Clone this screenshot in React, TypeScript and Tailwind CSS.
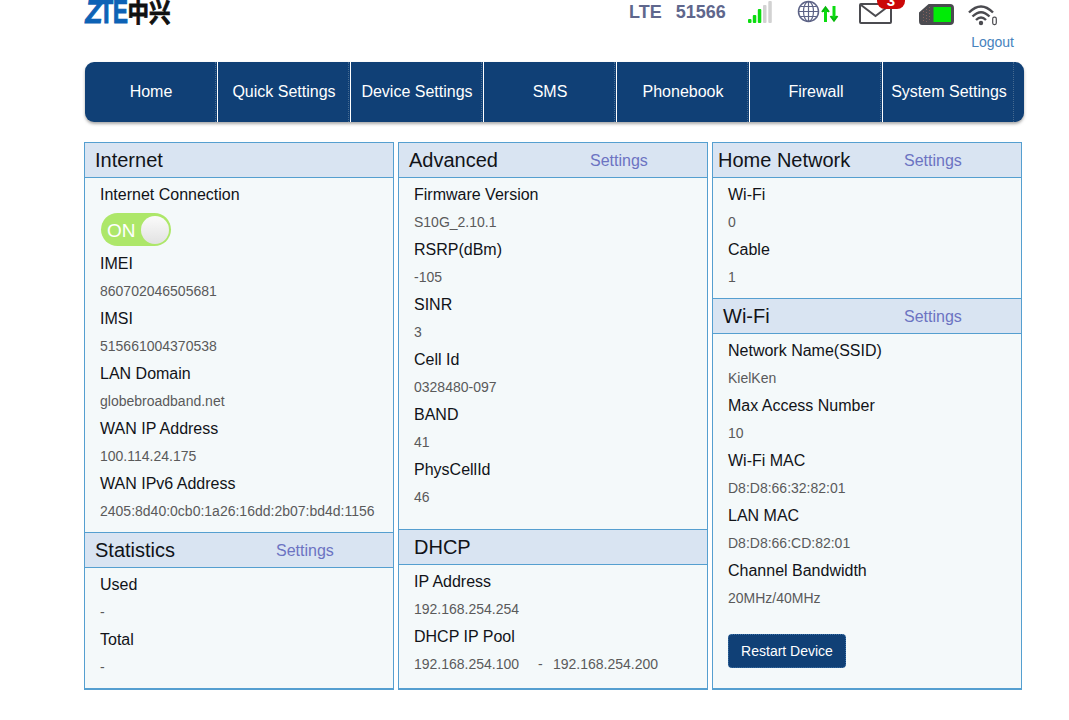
import React from 'react';

type Field = { label: string; value: React.ReactNode };

const navItems = ['Home', 'Quick Settings', 'Device Settings', 'SMS', 'Phonebook', 'Firewall', 'System Settings'];

function Logo() {
  return (
    <svg width="90" height="28" className="block shrink-0 overflow-hidden">
      <g fontFamily="'Liberation Sans', Arial, sans-serif" fontWeight="700" fontSize="33" fill="#0d62b5" stroke="#0d62b5" strokeWidth="1.2">
        <text x="0" y="23" textLength="17" lengthAdjust="spacingAndGlyphs" transform="translate(3.2 0) skewX(-8)">Z</text>
        <text x="15.500" y="23" textLength="28.500" lengthAdjust="spacingAndGlyphs">TE</text>
      </g>
      <text x="43.500" y="22" textLength="43" lengthAdjust="spacingAndGlyphs" fontFamily="'Noto Sans CJK SC', sans-serif" fontWeight="700" fontSize="26" fill="#111111" stroke="#111111" strokeWidth="0.8">中兴</text>
    </svg>
  );
}

function SignalIcon() {
  return (
    <svg width="26" height="24" className="block shrink-0">
      <g fill="#0bdc10">
        <rect x="0" y="19" width="3.5" height="4" rx="1" />
        <rect x="4.800" y="15" width="3.500" height="8" rx="1" />
        <rect x="9.800" y="9" width="3.500" height="14" rx="1" />
      </g>
      <g fill="#d2d2d2">
        <rect x="15" y="5" width="3.500" height="18" rx="1" />
        <rect x="20.300" y="1" width="3.500" height="22" rx="1" />
      </g>
    </svg>
  );
}

function NetworkIcon() {
  return (
    <svg width="42" height="25" className="block shrink-0" fill="none">
      <g stroke="#5d6386" strokeWidth="1.2">
        <circle cx="11.500" cy="11.500" r="10" strokeWidth="1.500" />
        <ellipse cx="11.500" cy="11.500" rx="5" ry="10" />
        <path d="M11.500 1.500v20M1.500 11.500h20M3.500 6.500h16M3.500 16.500h16" />
      </g>
      <path d="M28.500 22V8M37 6V20" stroke="#0bdc10" strokeWidth="3" />
      <path d="M25 12L28.500 7.500L32 12M33.500 16L37 20.500L40.500 16" stroke="#08b80c" strokeWidth="2" fill="#0bdc10" />
    </svg>
  );
}

function MessageIcon() {
  return (
    <div className="relative h-6 w-12">
      <svg width="36" height="25" className="block" fill="none">
        <rect x="1" y="4" width="31" height="19" rx="1" stroke="#4b4b50" strokeWidth="2" />
        <path d="M2 5L16.500 16L31 5" stroke="#4b4b50" strokeWidth="2" />
      </svg>
      <div className="absolute -top-[9px] left-[18px] flex h-[18px] w-[28px] items-center justify-center rounded-lg bg-[#cb0808] text-[15px] leading-none font-bold text-white">3</div>
    </div>
  );
}

function SimIcon() {
  return (
    <svg width="36" height="24" className="block shrink-0">
      <path d="M10 2H31Q34 2 34 5V18Q34 21 31 21H3Q1 21 1 18V10Z" fill="#4b4b50" stroke="#4b4b50" strokeWidth="2" />
      <path d="M4.500 8V19M7.500 6V19M10.500 4V19" stroke="#85625d" strokeWidth="1" strokeDasharray="1 2" />
      <rect x="14.500" y="4" width="17.500" height="15" fill="#00eb06" />
    </svg>
  );
}

function WifiIcon() {
  return (
    <svg width="30" height="22" className="block shrink-0" fill="none" stroke="#4b4b50">
      <g strokeWidth="2.400">
        <path d="M1 7.500Q13 -4.500 25 7.500" />
        <path d="M4.500 11.500Q13 3 21.500 11.500" />
        <path d="M8 15Q13 10 18 15" />
      </g>
      <circle cx="13" cy="18" r="2.200" fill="#4b4b50" stroke="none" />
      <rect x="24.700" y="12.200" width="3.600" height="7.400" rx="1.500" strokeWidth="1.200" />
    </svg>
  );
}

function PanelHeader({ title, indent, settings = false, first = false }: { title: string; indent: string; settings?: boolean; first?: boolean }) {
  return (
    <div className={`grid shrink-0 grid-cols-[191px_1fr] items-center border-b border-[#559fd0] bg-[#d9e4f2] ${first ? 'h-[35px]' : 'h-9 border-t'}`}>
      <h2 className={`${indent} text-[20px] leading-[34px] text-[#111318]`}>{title}</h2>
      {settings && <a className="pt-[2px] text-[16px] leading-8 text-[#6c73c2]">Settings</a>}
    </div>
  );
}

function Fields({ items }: { items: Field[] }) {
  return (
    <dl className="px-[15px]">
      {items.map((item) => (
        <div key={item.label}>
          <dt className="text-[16px] leading-[27px] text-[#111318]">{item.label}</dt>
          <dd className="text-[14px] leading-7 text-[#5a5a5a]">{item.value}</dd>
        </div>
      ))}
    </dl>
  );
}

function Column({ children }: { children: React.ReactNode }) {
  return <section className="flex h-[548px] w-[310px] flex-col border border-b-2 border-[#559fd0] bg-[#f4f9fa]">{children}</section>;
}

export default function App() {
  return (
    <div className="h-[720px] overflow-hidden bg-white font-['Liberation_Sans',Arial,sans-serif]">
      <header className="flex h-[62px] flex-col pl-[84px]">
        <div className="flex h-7 shrink-0 items-start">
          <Logo />
          <div className="ml-[455px] flex w-[119px] gap-[14px] text-[18px] leading-6 font-bold text-[#5f678d]">
            <span>LTE</span>
            <span>51566</span>
          </div>
          <SignalIcon />
          <div className="ml-[23px]"><NetworkIcon /></div>
          <div className="ml-[20px]"><MessageIcon /></div>
          <div className="ml-3 pt-[3px]"><SimIcon /></div>
          <div className="ml-[13px] pt-[5px]"><WifiIcon /></div>
        </div>
        <a className="mr-[55px] self-end text-[14px] leading-7 text-[#4682bd]">Logout</a>
      </header>

      <nav className="ml-[85px] flex h-[60px] w-[939px] overflow-hidden rounded-[9px] bg-[#104076] shadow-[0_2px_3px_rgba(90,90,90,0.5)]">
        {navItems.map((item, index) => (
          <a key={item} className={`flex w-[133px] shrink-0 border-r pr-px text-[16px] text-white ${index === 6 ? 'border-[#104076]' : 'border-white'}`}>
            <span className="flex flex-1 items-center justify-center border-r border-dotted border-[#45698f] pb-px pl-[2px] whitespace-nowrap">{item}</span>
          </a>
        ))}
      </nav>

      <main className="mt-5 ml-[84px] flex gap-1">
        <Column>
          <PanelHeader title="Internet" indent="pl-[10px]" first />
          <div className="h-[354px] pt-[3px]">
            <div className="px-[15px] text-[16px] leading-[27px] text-[#111318]">Internet Connection</div>
            <div className="h-[42px] pt-[5px] pl-4">
              <div className="flex h-[33px] w-[70px] items-center justify-between rounded-full bg-[#ade769] pr-[2px] pl-[6px] text-[19px] text-white">
                <span className="pt-px leading-none">ON</span>
                <span className="h-[28px] w-[28px] rounded-full bg-linear-to-b from-[#fbfbfb] to-[#e2e2e2]" />
              </div>
            </div>
            <Fields
              items={[
                { label: 'IMEI', value: '860702046505681' },
                { label: 'IMSI', value: '515661004370538' },
                { label: 'LAN Domain', value: 'globebroadband.net' },
                { label: 'WAN IP Address', value: '100.114.24.175' },
                { label: 'WAN IPv6 Address', value: '2405:8d40:0cb0:1a26:16dd:2b07:bd4d:1156' },
              ]}
            />
          </div>
          <PanelHeader title="Statistics" indent="pl-[10px]" settings />
          <div className="pt-[3px]">
            <Fields items={[{ label: 'Used', value: '-' }, { label: 'Total', value: '-' }]} />
          </div>
        </Column>

        <Column>
          <PanelHeader title="Advanced" indent="pl-[10px]" settings first />
          <div className="h-[351px] pt-[3px]">
            <Fields
              items={[
                { label: 'Firmware Version', value: 'S10G_2.10.1' },
                { label: 'RSRP(dBm)', value: '-105' },
                { label: 'SINR', value: '3' },
                { label: 'Cell Id', value: '0328480-097' },
                { label: 'BAND', value: '41' },
                { label: 'PhysCellId', value: '46' },
              ]}
            />
          </div>
          <PanelHeader title="DHCP" indent="pl-[15px]" />
          <div className="pt-[3px]">
            <Fields
              items={[
                { label: 'IP Address', value: '192.168.254.254' },
                {
                  label: 'DHCP IP Pool',
                  value: (
                    <span className="flex">
                      <span className="w-[124px]">192.168.254.100</span>
                      <span className="w-[15px]">-</span>
                      <span>192.168.254.200</span>
                    </span>
                  ),
                },
              ]}
            />
          </div>
        </Column>

        <Column>
          <PanelHeader title="Home Network" indent="pl-[5px]" settings first />
          <div className="h-[120px] pt-[3px]">
            <Fields items={[{ label: 'Wi-Fi', value: '0' }, { label: 'Cable', value: '1' }]} />
          </div>
          <PanelHeader title="Wi-Fi" indent="pl-[10px]" settings />
          <div className="pt-[3px]">
            <Fields
              items={[
                { label: 'Network Name(SSID)', value: 'KielKen' },
                { label: 'Max Access Number', value: '10' },
                { label: 'Wi-Fi MAC', value: 'D8:D8:66:32:82:01' },
                { label: 'LAN MAC', value: 'D8:D8:66:CD:82:01' },
                { label: 'Channel Bandwidth', value: '20MHz/40MHz' },
              ]}
            />
          </div>
          <button className="mt-[22px] ml-[15px] h-[34px] w-[118px] rounded-[4px] border border-dotted border-[#3d73a9] bg-[#104076] text-[14px] text-white">Restart Device</button>
        </Column>
      </main>
    </div>
  );
}
